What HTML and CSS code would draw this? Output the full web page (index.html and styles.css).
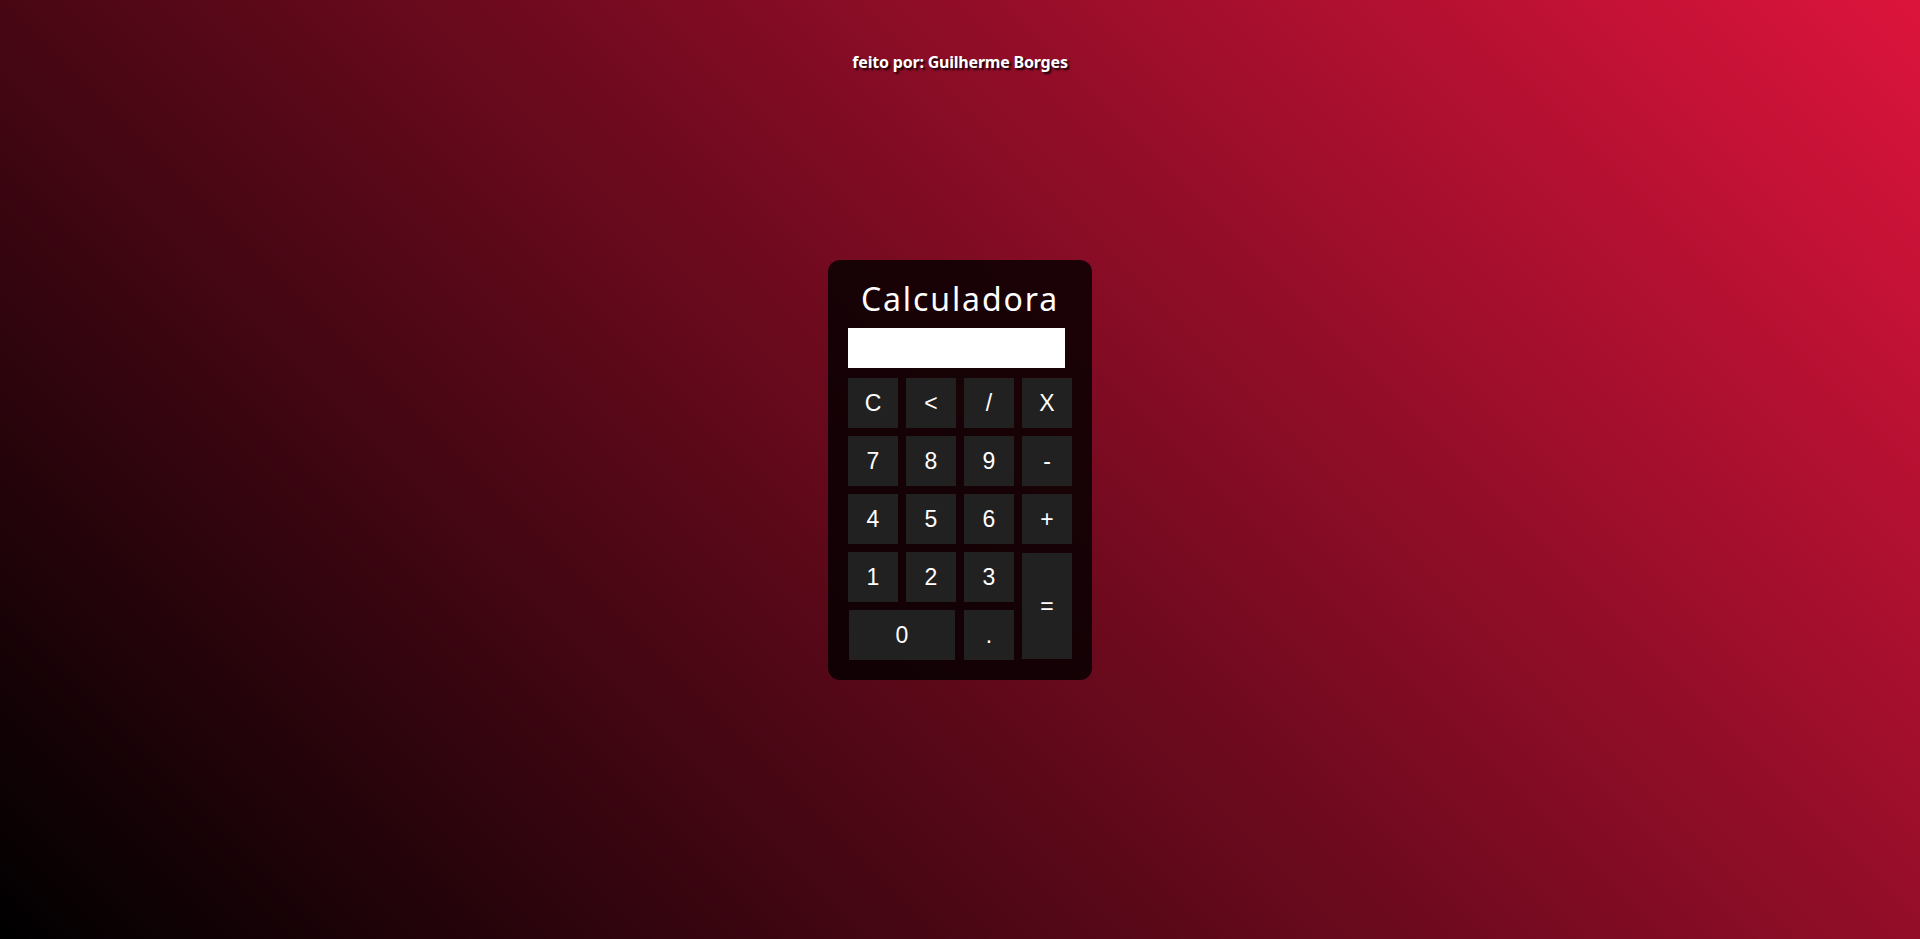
FILE: index.html
```html
<!DOCTYPE html>
<html lang="pt-BR">
<head>
<meta charset="utf-8">
<title>Calculadora</title>
<link rel="stylesheet" href="styles.css">
</head>
<body>
<header class="credit">feito por: Guilherme Borges</header>
<main class="calc">
  <h1 class="calc-title">Calculadora</h1>
  <input class="display" type="text" readonly>
  <div class="keys">
    <button class="key">C</button>
    <button class="key">&lt;</button>
    <button class="key">/</button>
    <button class="key">X</button>
    <button class="key">7</button>
    <button class="key">8</button>
    <button class="key">9</button>
    <button class="key">-</button>
    <button class="key">4</button>
    <button class="key">5</button>
    <button class="key">6</button>
    <button class="key">+</button>
    <button class="key">1</button>
    <button class="key">2</button>
    <button class="key">3</button>
    <button class="key key-equal">=</button>
    <button class="key key-zero">0</button>
    <button class="key">.</button>
  </div>
</main>
</body>
</html>
```
FILE: styles.css
```css
* { box-sizing: border-box; }

html, body { height: 100%; }

body {
  margin: 0;
  min-height: 100vh;
  background: linear-gradient(45deg, #000000, #dc143c);
  font-family: "Noto Sans", "Liberation Sans", sans-serif;
  color: #fff;
  display: grid;
  grid-template-rows: 1fr auto 1fr;
  justify-items: center;
}

.credit {
  align-self: start;
  padding-top: 51px;
  font-size: 16px;
  font-weight: 700;
  letter-spacing: -0.2px;
  text-shadow: 2px 2px 2px rgba(0, 0, 0, 0.85);
}

.calc {
  width: 264px;
  background: rgba(0, 0, 0, 0.8);
  border-radius: 12px;
  padding: 17px 20px 20px;
  display: flex;
  flex-direction: column;
}

.calc-title {
  margin: 0 0 7px;
  font-size: 32px;
  font-weight: 400;
  line-height: 44px;
  text-align: center;
  letter-spacing: 1.9px;
}

.display {
  width: 217px;
  height: 40px;
  border: none;
  background: #fff;
  margin: 0 0 10px;
  padding: 0 6px;
  font-size: 22px;
  outline: none;
}

.keys {
  display: grid;
  grid-template-columns: repeat(4, 50px);
  grid-auto-rows: 50px;
  gap: 8px;
}

.key {
  border: none;
  background: #212121;
  color: #fff;
  font-family: "Liberation Sans", Arial, sans-serif;
  font-size: 23px;
  padding: 2px 0 0;
  cursor: pointer;
}

.key-equal {
  grid-column: 4;
  grid-row: 4 / span 2;
  margin: 1px 0 1px 0;
}

.key-zero {
  grid-column: 1 / span 2;
  margin: 0 1px;
}
```
